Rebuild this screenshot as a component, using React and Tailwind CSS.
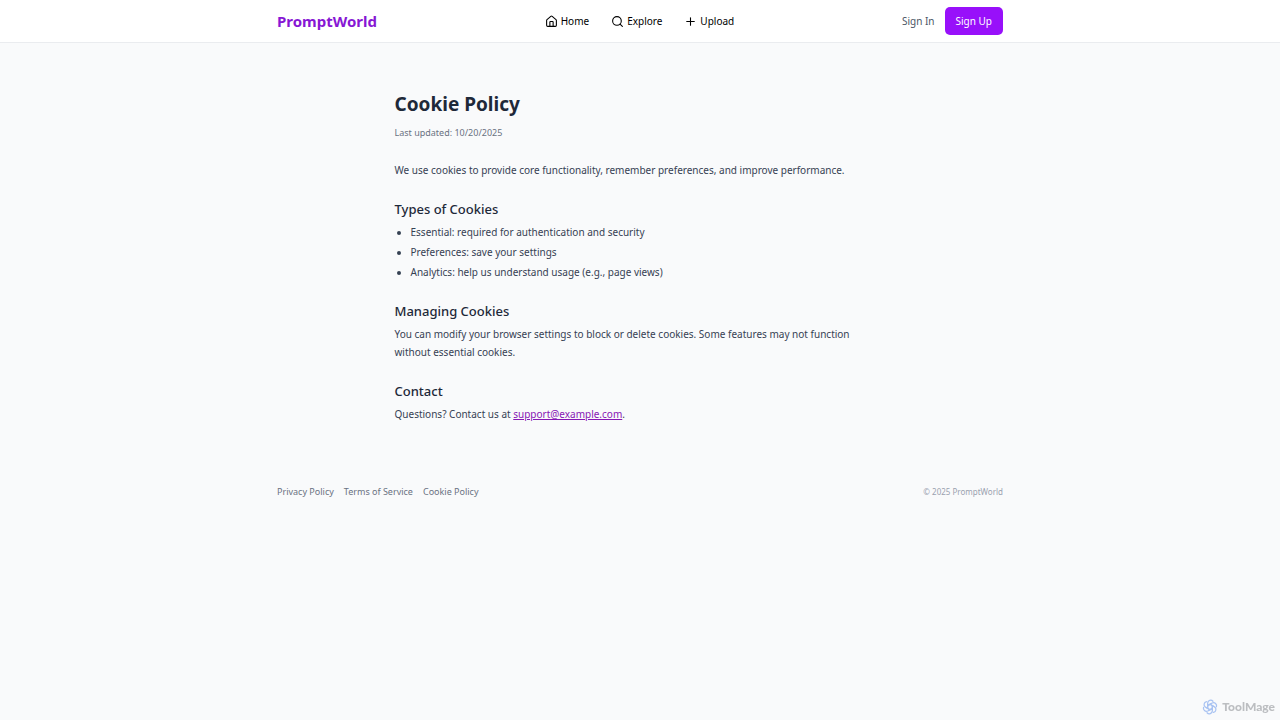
import { House, Search, Plus } from 'lucide-react'

const navLinks = [
  { label: 'Home', icon: House },
  { label: 'Explore', icon: Search },
  { label: 'Upload', icon: Plus },
]

const cookieTypes = [
  'Essential: required for authentication and security',
  'Preferences: save your settings',
  'Analytics: help us understand usage (e.g., page views)',
]

const footerLinks = ['Privacy Policy', 'Terms of Service', 'Cookie Policy']

function Section({ title, children }) {
  return (
    <section className="mt-5">
      <h2 className="mb-1 text-[13px] leading-5 font-medium text-[#1e2939]">{title}</h2>
      {children}
    </section>
  )
}

function ToolMageLogo() {
  return (
    <svg viewBox="0 0 24 24" className="size-4" fill="none" stroke="#a9c3f2" strokeWidth="1.9" strokeLinecap="round" strokeLinejoin="round" aria-hidden="true">
      {[0, 60, 120, 180, 240, 300].map((angle) => (
        <path key={angle} transform={`rotate(${angle} 12 12)`} d="M8.5 14V6.2a4.5 4.5 0 0 1 7.9-2.8M8.5 10l5.2-3" />
      ))}
    </svg>
  )
}

export default function App() {
  return (
    <div className="flex min-h-screen flex-col bg-[#f9fafb] font-['Noto_Sans','Open_Sans',sans-serif] text-[10px] leading-[18px] text-[#364153]">
      <header className="border-b border-[#eaecef] bg-white">
        <div className="mx-auto flex h-[42px] w-full max-w-[726px] items-center justify-between">
          <a href="#" className="text-[15px] leading-5 font-bold text-[#8717d4]">PromptWorld</a>
          <nav className="flex items-center gap-[22px] text-black">
            {navLinks.map(({ label, icon: Icon }) => (
              <a key={label} href="#" className="flex items-center gap-[3px]">
                <Icon size={13} strokeWidth={2} />
                {label}
              </a>
            ))}
          </nav>
          <div className="flex items-center gap-[10px]">
            <a href="#" className="text-[#4a5565]">Sign In</a>
            <button type="button" className="h-7 rounded-[5px] bg-[#9810fa] px-[11px] text-white">Sign Up</button>
          </div>
        </div>
      </header>

      <main className="mx-auto w-full max-w-[491px] pt-12 pr-2">
        <h1 className="text-[19px] leading-[26px] font-bold text-[#1e2939]">Cookie Policy</h1>
        <p className="mt-2 text-[9px] leading-4 text-[#6a7282]">Last updated: 10/20/2025</p>
        <p className="mt-5">
          We use cookies to provide core functionality, remember preferences, and improve performance.
        </p>

        <Section title="Types of Cookies">
          <ul className="list-disc space-y-0.5 pl-4">
            {cookieTypes.map((item) => (
              <li key={item}>{item}</li>
            ))}
          </ul>
        </Section>

        <Section title="Managing Cookies">
          <p>
            You can modify your browser settings to block or delete cookies. Some features may not function
            without essential cookies.
          </p>
        </Section>

        <Section title="Contact">
          <p>
            Questions? Contact us at{' '}
            <a href="mailto:support@example.com" className="text-[#8717b4] underline">support@example.com</a>.
          </p>
        </Section>
      </main>

      <footer className="mx-auto mt-[61px] flex w-full max-w-[726px] items-center justify-between">
        <div className="flex gap-[10px] text-[9px] leading-4 text-[#6a7282]">
          {footerLinks.map((label) => (
            <a key={label} href="#">{label}</a>
          ))}
        </div>
        <p className="text-[8px] leading-4 text-[#99a1af]">© 2025 PromptWorld</p>
      </footer>

      <div className="fixed right-[5px] bottom-1 flex items-center gap-1 font-['Lato','Open_Sans',sans-serif] text-[12px] font-black text-[#bcbec1]">
        <ToolMageLogo />
        ToolMage
      </div>
    </div>
  )
}
